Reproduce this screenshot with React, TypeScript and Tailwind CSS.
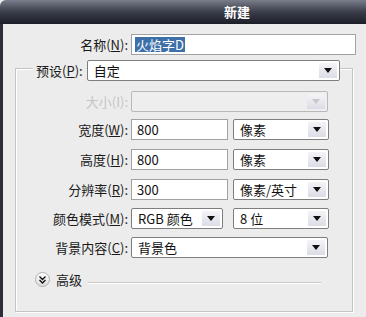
import React from "react";

const font = { fontFamily: '"Noto Sans CJK SC", "Liberation Sans", sans-serif' };

function Arrow({ disabled }: { disabled?: boolean }) {
  return (
    <div className="flex h-full w-[18px] items-center justify-center bg-gradient-to-b from-[#f4f4f8] to-[#dcdce6]">
      <svg width="8" height="5" viewBox="0 0 8 5">
        <path d="M0 0h8L4 5z" fill={disabled ? "#c8c8c8" : "#111"} />
      </svg>
    </div>
  );
}

function Select({
  value,
  w,
  disabled,
}: {
  value: string;
  w: string;
  disabled?: boolean;
}) {
  return (
    <div
      className={`flex h-[21px] ${w} items-center justify-between rounded-[2px] border pr-[2px] ${
        disabled ? "border-[#b8b8b8] bg-[#eeeeee]" : "border-[#7e7e7e] bg-white"
      }`}
    >
      <span className="pl-[6px] text-[13px] leading-none text-[#111]">{value}</span>
      <div className="h-[15px]">
        <Arrow disabled={disabled} />
      </div>
    </div>
  );
}

function Input({ value, w }: { value: string; w: string }) {
  return (
    <div className={`flex h-[21px] ${w} items-center border border-[#a2a2a2] bg-white pl-[5px] text-[13px] leading-none text-[#111]`}>
      {value}
    </div>
  );
}

function Label({ children, disabled }: { children: React.ReactNode; disabled?: boolean }) {
  return (
    <div
      className={`w-[112px] text-right text-[13px] leading-none ${
        disabled ? "text-[#c4c4c4]" : "text-[#1a1a1a]"
      }`}
    >
      {children}
    </div>
  );
}

export default function App() {
  return (
    <div className="h-[317px] w-[366px] overflow-hidden bg-[#ececec]" style={font}>
      <div className="flex h-[24px] items-center justify-center rounded-tl-[6px] bg-gradient-to-b from-[#7a7d8a] via-[#3a3d4a] to-[#1c1e27] pl-[108px] text-[13px] font-bold text-white">
        新建
      </div>
      <div className="flex h-[293px] border-l-[3px] border-[#2c2e3a]">
        <div className="flex-1">
          <div className="mt-[10px] flex items-center">
            <div className="w-[125px] text-right text-[13px] leading-none text-[#1a1a1a]">
              名称(<span className="underline">N</span>):
            </div>
            <div className="ml-[3px] flex h-[21px] w-[225px] items-center border border-[#a2a2a2] bg-white pl-[3px]">
              <span className="bg-[#3d6fa8] px-[1px] text-[13px] leading-[15px] text-white">火焰字D</span>
            </div>
          </div>

          <div className="ml-[12px] mt-[13px] h-[244px] w-[338px] border border-[#c4c4c4] shadow-[inset_1px_1px_0_#fff,1px_1px_0_#fff]">
            <div className="-mt-[9px] flex items-center">
              <div className="ml-[17px] bg-[#ececec] px-[3px] text-[13px] leading-none text-[#1a1a1a]">
                预设(<span className="underline">P</span>):
              </div>
              <div className="ml-[1px]">
                <Select value="自定" w="w-[253px]" />
              </div>
            </div>

            <div className="mt-[10px] flex items-center">
              <Label disabled>大小(I):</Label>
              <div className="ml-[3px]">
                <Select value="" w="w-[197px]" disabled />
              </div>
            </div>

            <div className="mt-[7px] flex items-center">
              <Label>宽度(<span className="underline">W</span>):</Label>
              <div className="ml-[3px]">
                <Input value="800" w="w-[97px]" />
              </div>
              <div className="ml-[5px]">
                <Select value="像素" w="w-[96px]" />
              </div>
            </div>

            <div className="mt-[9px] flex items-center">
              <Label>高度(<span className="underline">H</span>):</Label>
              <div className="ml-[3px]">
                <Input value="800" w="w-[97px]" />
              </div>
              <div className="ml-[5px]">
                <Select value="像素" w="w-[96px]" />
              </div>
            </div>

            <div className="mt-[9px] flex items-center">
              <Label>分辨率(<span className="underline">R</span>):</Label>
              <div className="ml-[3px]">
                <Input value="300" w="w-[97px]" />
              </div>
              <div className="ml-[5px]">
                <Select value="像素/英寸" w="w-[96px]" />
              </div>
            </div>

            <div className="mt-[8px] flex items-center">
              <Label>颜色模式(<span className="underline">M</span>):</Label>
              <div className="ml-[3px]">
                <Select value="RGB 颜色" w="w-[92px]" />
              </div>
              <div className="ml-[10px]">
                <Select value="8 位" w="w-[96px]" />
              </div>
            </div>

            <div className="mt-[8px] flex items-center">
              <Label>背景内容(<span className="underline">C</span>):</Label>
              <div className="ml-[3px]">
                <Select value="背景色" w="w-[197px]" />
              </div>
            </div>

            <div className="mt-[14px] flex items-center">
              <div className="ml-[19px] flex h-[15px] w-[15px] items-center justify-center rounded-full border border-[#b0b0b0] bg-gradient-to-b from-white to-[#dcdcdc]">
                <svg width="7" height="8" viewBox="0 0 7 8">
                  <path d="M0.5 0.5L3.5 3.5L6.5 0.5M0.5 4L3.5 7L6.5 4" stroke="#111" strokeWidth="1.3" fill="none" />
                </svg>
              </div>
              <span className="ml-[6px] text-[13px] leading-none text-[#1a1a1a]">高级</span>
              <div className="ml-[6px] mt-[6px] h-[2px] w-[233px] border-t border-b border-t-[#c8c8c8] border-b-white" />
            </div>
          </div>
        </div>
      </div>
    </div>
  );
}
